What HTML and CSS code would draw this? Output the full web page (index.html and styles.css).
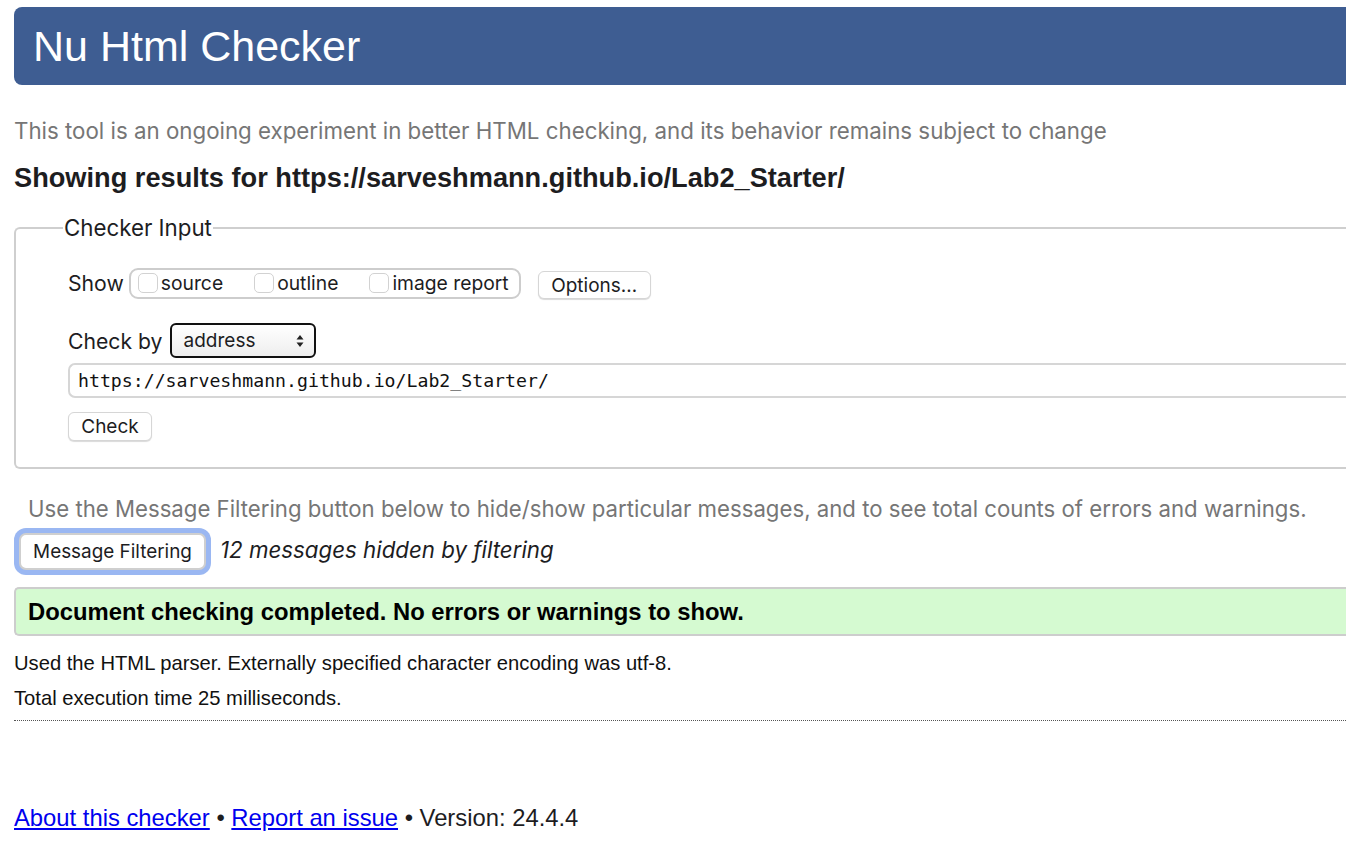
FILE: index.html
```html
<!DOCTYPE html>
<html>
<head>
<meta charset="utf-8">
<title>Nu Html Checker</title>
<link rel="stylesheet" href="styles.css">
</head>
<body>
<div class="page">
  <h1 class="banner">Nu Html Checker</h1>
  <p class="intro">This tool is an ongoing experiment in better HTML checking, and its behavior remains subject to change</p>
  <h2 class="results-title">Showing results for https://sarveshmann.github.io/Lab2_Starter/</h2>
  <fieldset class="input-box">
    <legend class="input-legend">Checker Input</legend>
    <div class="row show-row">
      <span class="label">Show</span>
      <span class="opts">
        <label class="opt"><span class="cb"></span>source</label>
        <label class="opt"><span class="cb"></span>outline</label>
        <label class="opt"><span class="cb"></span>image report</label>
      </span>
      <span class="btn options-btn">Options…</span>
    </div>
    <div class="row check-row">
      <span class="label">Check by</span>
      <span class="select">address<svg class="updown" width="8" height="14" viewBox="0 0 8 14"><path d="M4 1 L7.5 5.5 H0.5 Z M4 13 L7.5 8.5 H0.5 Z" fill="#222"/></svg></span>
    </div>
    <div class="url-input">https://sarveshmann.github.io/Lab2_Starter/</div>
    <span class="btn check-btn">Check</span>
  </fieldset>
  <p class="filter-note">Use the Message Filtering button below to hide/show particular messages, and to see total counts of errors and warnings.</p>
  <div class="filter-row">
    <span class="focus-ring"><span class="btn filter-btn">Message Filtering</span></span>
    <em class="hidden-count">12 messages hidden by filtering</em>
  </div>
  <div class="success">Document checking completed. No errors or warnings to show.</div>
  <p class="details first">Used the HTML parser. Externally specified character encoding was utf-8.</p>
  <p class="details">Total execution time 25 milliseconds.</p>
  <hr class="dots">
  <p class="footer"><a href="#">About this checker</a> • <a href="#">Report an issue</a> • Version: 24.4.4</p>
</div>
</body>
</html>
```
FILE: styles.css
```css
html, body {
  margin: 0;
  padding: 0;
  background: #fff;
}
body {
  font-family: "Liberation Sans", Arial, sans-serif;
  color: #1d1d1f;
}
.page {
  box-sizing: border-box;
  width: 100%;
  padding: 7px 0 0 14px;
}
.banner {
  margin: 0;
  height: 78px;
  background: #3e5d92;
  color: #fff;
  font-family: "Liberation Sans", Arial, sans-serif;
  font-weight: normal;
  font-size: 43px;
  line-height: 78px;
  padding-left: 19px;
  border-radius: 8px 0 0 8px;
}
.intro {
  margin: 32px 0 0;
  font-family: Inter, "Noto Sans", sans-serif;
  font-size: 22.3px;
  line-height: 28px;
  color: #767676;
}
.results-title {
  margin: 17px 0 0;
  font-size: 27.2px;
  line-height: 32px;
  font-weight: bold;
  color: #1d1d1f;
}
.input-box {
  margin: 21px 0 0;
  padding: 26px 0 26px 52px;
  border: 2px solid #cfcfcf;
  border-right: 0;
  border-radius: 6px 0 0 6px;
  font-family: Inter, "Noto Sans", sans-serif;
  min-width: 0;
}
.input-legend {
  font-size: 22.3px;
  padding: 0 1px;
  margin-left: -5px;
  color: #1d1d1f;
  line-height: 26px;
}
.row {
  display: flex;
  align-items: center;
}
.label {
  font-size: 21.2px;
  color: #1d1d1f;
}
.opts {
  display: flex;
  align-items: center;
  height: 31px;
  box-sizing: border-box;
  margin-left: 5px;
  padding: 0 10px 0 7px;
  border: 2px solid #cdcdcd;
  border-radius: 9px;
  gap: 31px;
}
.opt {
  display: flex;
  align-items: center;
  font-size: 19.3px;
  color: #1d1d1f;
}
.cb {
  width: 20px;
  height: 20px;
  border: 1px solid #d2d2d2;
  border-radius: 5px;
  margin-right: 3px;
  box-sizing: border-box;
  background: #fff;
}
.btn {
  display: inline-flex;
  align-items: center;
  justify-content: center;
  font-family: Inter, "Noto Sans", sans-serif;
  font-size: 19px;
  color: #1d1d1f;
  background: #fff;
  border: 1px solid #d6d6d6;
  border-radius: 6px;
  box-shadow: 0 1px 1px rgba(0,0,0,0.15);
  box-sizing: border-box;
}
.options-btn {
  margin-left: 17px;
  margin-top: 4px;
  width: 113px;
  height: 28px;
}
.check-row {
  margin-top: 24px;
}
.select {
  display: inline-flex;
  align-items: center;
  justify-content: space-between;
  margin-left: 7px;
  width: 146px;
  height: 35px;
  box-sizing: border-box;
  padding: 0 10px 0 12px;
  border: 2px solid #111;
  border-radius: 6px;
  background: linear-gradient(#fff, #eeeeee);
  font-size: 19px;
  color: #1d1d1f;
}
.url-input {
  margin-top: 5px;
  height: 35px;
  box-sizing: border-box;
  border: 2px solid #d6d6d6;
  border-right: 0;
  border-radius: 7px 0 0 7px;
  padding: 0 8px;
  display: flex;
  align-items: center;
  font-family: "DejaVu Sans Mono", monospace;
  font-size: 18.2px;
  color: #111;
}
.check-btn {
  margin-top: 14px;
  width: 84px;
  height: 29px;
}
.filter-note {
  margin: 26px 0 0 14px;
  font-family: Inter, "Noto Sans", sans-serif;
  font-size: 22.2px;
  line-height: 28px;
  color: #767676;
}
.filter-row {
  margin-top: 5px;
  display: flex;
  align-items: center;
}
.focus-ring {
  display: inline-flex;
  padding: 5px;
  border-radius: 12px;
  background: #9ab7f2;
}
.filter-btn {
  width: 187px;
  height: 37px;
  border: 2px solid #cfcfcf;
  border-radius: 7px;
  box-shadow: none;
  font-size: 18.9px;
}
.hidden-count {
  margin-left: 9px;
  margin-bottom: 4px;
  font-family: Inter, "Noto Sans", sans-serif;
  font-size: 22.3px;
  color: #1d1d1f;
}
.success {
  margin-top: 12px;
  height: 49px;
  box-sizing: border-box;
  border: 2px solid #cdcdcd;
  border-right: 0;
  border-radius: 5px 0 0 5px;
  background: #d5fad1;
  padding-left: 12px;
  display: flex;
  align-items: center;
  font-size: 23.8px;
  font-weight: bold;
  color: #000;
}
.details {
  margin: 11px 0 0;
  font-size: 20.2px;
  line-height: 24px;
  color: #111;
}
.details.first {
  margin-top: 15px;
}
.dots {
  margin: 10px 0 0;
  border: 0;
  border-top: 1px dotted #555;
  height: 0;
}
.footer {
  margin: 83px 0 0;
  font-size: 23.8px;
  line-height: 28px;
  color: #1d1d1f;
}
.footer a {
  color: #0000ee;
  text-decoration: underline;
}
```
